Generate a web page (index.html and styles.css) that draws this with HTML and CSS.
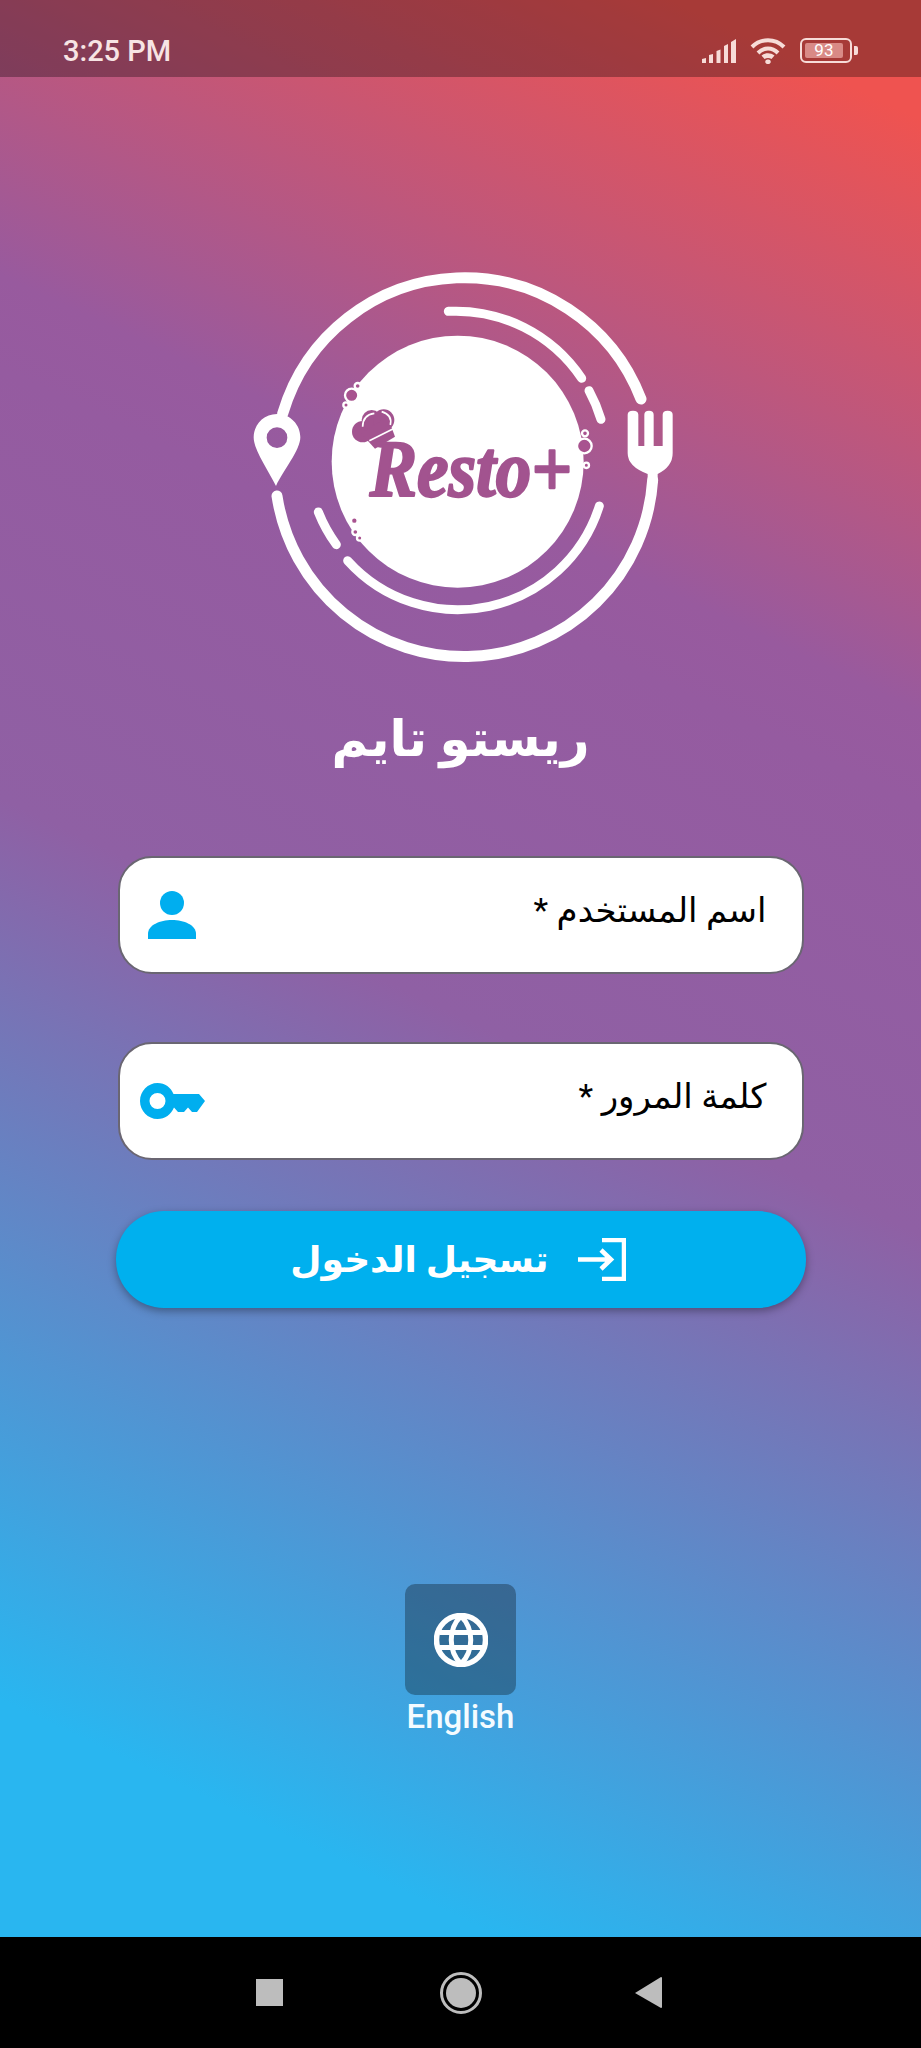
FILE: index.html
```html
<!DOCTYPE html>
<html lang="ar">
<head>
    <meta charset="UTF-8">
    <meta name="viewport" content="width=device-width, initial-scale=1.0">
    <title>Resto+</title>
    <link rel="stylesheet" href="styles.css">
</head>
<body>

<div class="app">
    <div class="status-bar">
        <span class="time">3:25 PM</span>
        <div class="status-icons">
            <svg class="signal" width="34" height="24" viewBox="0 0 34 24">
                <path d="M0 24v-4l4-1v5zM7 24v-8l4-1v9zM14.500 24v-12l4-1.500v13.500zM22 24v-17l4-2v19zM29 24v-21l5-3v24z"/>
            </svg>
            <svg class="wifi" width="36" height="26" viewBox="0 0 36 26">
                <path class="wifi-arc" d="M2 9C11 0 25 0 34 9M8 15c6-6 14-6 20 0"/>
                <path d="M11.500 17.500c4-3 9-3 13 0l-3 3.500c-2-1.500-5-1.500-7 0zM18 21.500a2.300 2.300 0 1 1 0 4.500a2.300 2.300 0 1 1 0-4.500z"/>
            </svg>
            <div class="battery">
                <div class="battery-body"><span class="battery-level">93</span></div>
                <div class="battery-tip"></div>
            </div>
        </div>
    </div>

    <!-- logo -->
    <svg class="logo" width="460" height="430" viewBox="0 0 1380 1290">
        <circle cx="680" cy="635" r="378" fill="#fff"/>
        <g fill="none" stroke="#fff" stroke-linecap="round">
            <path stroke-width="33" d="M155 491A568 568 0 0 1 1230 447"/>
            <path stroke-width="33" d="M1265 690A567.400 567.400 0 0 1 138 738"/>
            <path stroke-width="27" d="M652 184A455 455 0 0 1 1052 385"/>
            <path stroke-width="27" d="M1074 422A455 455 0 0 1 1110 508"/>
            <path stroke-width="27" d="M1105 768A445 445 0 0 1 350 932"/>
            <path stroke-width="27" d="M262 786A445 445 0 0 0 316 884"/>
        </g>
        <!-- pin -->
        <path fill="#fff" fill-rule="evenodd" d="M138 492C98 492 68 524 68 562C68 600 112 660 135 708C158 660 208 600 208 562C208 524 178 492 138 492ZM138 532a31 31 0 1 1 0 62a31 31 0 1 1 0-62Z"/>
        <!-- fork -->
        <path fill="#fff" d="M1190 494Q1190 482 1206 482Q1222 482 1222 494V588H1240V494Q1240 482 1254 482Q1268 482 1268 494V588H1295V494Q1295 482 1310 482Q1325 482 1325 494V610Q1325 650 1280 672V700H1250V672Q1190 650 1190 610Z"/>
        <!-- bubbles -->
        <g fill="#a8538f" stroke="#fff" stroke-width="7">
            <circle cx="362" cy="436" r="20"/>
            <circle cx="380" cy="408" r="9"/>
            <circle cx="345" cy="465" r="8"/>
            <circle cx="1060" cy="588" r="22"/>
            <circle cx="1062" cy="550" r="9"/>
            <circle cx="1066" cy="646" r="8"/>
            <circle cx="370" cy="812" r="10"/>
            <circle cx="373" cy="846" r="9"/>
            <circle cx="386" cy="864" r="8"/>
        </g>
        <!-- chef hat -->
        <g fill="#a2538f">
            <circle cx="395" cy="545" r="32"/>
            <circle cx="422" cy="510" r="30"/>
            <circle cx="458" cy="510" r="32"/>
            <path d="M390 550L470 500L492 560L432 596Z"/>
        </g>
        <path fill="none" stroke="#fff" stroke-width="5" d="M395 530Q395 495 430 490M452 485Q485 495 478 525M415 572L490 535"/>
        <text class="logo-text" x="416" y="737" textLength="606" lengthAdjust="spacingAndGlyphs">Resto+</text>
    </svg>

    <h1 class="title">ريستو تايم</h1>

    <div class="field">
        <span class="field-label">اسم المستخدم *</span>
        <span class="field-icon">
            <svg width="48" height="48" viewBox="0 0 48 48">
                <ellipse cx="24" cy="12" rx="12" ry="12"/>
                <path d="M0 48V43C0 34 12 29 24 29C36 29 48 34 48 43V48Z"/>
            </svg>
        </span>
    </div>

    <div class="field field-password">
        <span class="field-label">كلمة المرور *</span>
        <span class="field-icon">
            <svg width="65" height="36" viewBox="0 0 65 36">
                <path fill-rule="evenodd" d="M17.500 0C25 0 31 4.500 33.500 11H59L65 18L57 29H52L48 24.500L44 29H38L34 24.500C31 31.500 25 36 17.500 36C8 36 0 28 0 18C0 8 8 0 17.500 0ZM17.500 10a8 8 0 1 0 0 16a8 8 0 1 0 0-16Z"/>
            </svg>
        </span>
    </div>

    <button class="login-btn" type="button">
        <svg class="login-icon" width="48" height="43" viewBox="0 0 48 43">
            <path d="M24 2H46V41H24M0 21.500H32M23 12L33 21.500L23 31"/>
        </svg>
        <span>تسجيل الدخول</span>
    </button>

    <div class="lang">
        <div class="lang-box">
            <svg width="54" height="54" viewBox="0 0 54 54">
                <g fill="none" stroke="#fff" stroke-width="5.500">
                    <circle cx="27" cy="27" r="24.500"/>
                    <path stroke-width="5" d="M27 3C14 16 14 38 27 51M27 3C40 16 40 38 27 51M6 19.500H48M6 34.500H48"/>
                </g>
            </svg>
        </div>
        <span class="lang-name">English</span>
    </div>
</div>

<div class="nav-bar">
    <div class="nav-square"></div>
    <div class="nav-home"><div class="nav-home-dot"></div></div>
    <svg width="27" height="31" viewBox="0 0 27 31">
        <path fill="#bdbdbd" d="M0 16L26 0Q27 0 27 1V30Q27 31 26 31Z"/>
    </svg>
</div>

</body>
</html>
```

FILE: styles.css
```css
* {
    box-sizing: border-box;
}

body {
    margin: 0;
    width: 921px;
    height: 2048px;
    font-family: Roboto, "DejaVu Sans", sans-serif;
    background-color: #000;
}

.app {
    height: 1937px;
    display: flex;
    flex-direction: column;
    align-items: center;
    background: linear-gradient(25.4deg, #29b6f0 10%, #8f60a4 48%, #955ba0 66%, #985a9e 70%, #ef5350 95%);
}

.status-bar {
    width: 100%;
    height: 77px;
    padding: 24px 63px 0;
    display: flex;
    justify-content: space-between;
    align-items: center;
    background-color: rgba(0, 0, 0, 0.3);
    color: #f7e4e4;
}

.time {
    font-size: 29px;
    font-weight: 500;
}

.status-icons {
    display: flex;
    align-items: center;
    gap: 14px;
}

.signal, .wifi {
    fill: #f7dcd8;
}

.wifi-arc {
    fill: none;
    stroke: #f7dcd8;
    stroke-width: 4;
}

.battery {
    display: flex;
    align-items: center;
    gap: 2px;
}

.battery-body {
    width: 52px;
    height: 25px;
    padding: 3px;
    border: 2.500px solid #f7dcd8;
    border-radius: 6px;
}

.battery-level {
    display: block;
    width: 90%;
    height: 100%;
    border-radius: 2px;
    background-color: #d98a86;
    color: #fff;
    font-size: 17px;
    line-height: 14px;
    text-align: center;
}

.battery-tip {
    width: 4px;
    height: 9px;
    border-radius: 0 2px 2px 0;
    background-color: #f7dcd8;
}

.logo {
    margin-top: 173px;
}

.logo-text {
    font-family: "Liberation Serif", serif;
    font-style: italic;
    font-weight: 700;
    font-size: 240px;
    fill: #a2538f;
    stroke: #a2538f;
    stroke-width: 7;
    stroke-linejoin: round;
}

.title {
    margin: 8px 0 0;
    height: 102px;
    line-height: 102px;
    color: #fff;
    font-size: 50px;
    font-weight: 700;
}

.field {
    width: 686px;
    height: 118px;
    margin-top: 66px;
    padding: 0 35px 0 20px;
    display: flex;
    flex-direction: row;
    justify-content: space-between;
    align-items: center;
    direction: rtl;
    background-color: #fff;
    border: 2.500px solid #6a6672;
    border-radius: 34px;
}

.field-password {
    margin-top: 68px;
}

.field-label {
    padding-bottom: 10px;
    font-size: 34px;
    color: #000;
}

.field-icon {
    width: 65px;
    display: flex;
    justify-content: center;
    fill: #00aeef;
}

.login-btn {
    width: 690px;
    height: 97px;
    margin-top: 51px;
    padding: 0 5px 0 0;
    display: flex;
    justify-content: center;
    align-items: center;
    gap: 29px;
    direction: rtl;
    border: none;
    border-radius: 48px;
    background-color: #00b0ee;
    box-shadow: 0 3px 8px rgba(0, 0, 0, 0.35);
    color: #fff;
    font-family: inherit;
    font-size: 36px;
    font-weight: 700;
}

.login-icon {
    fill: none;
    stroke: #fff;
    stroke-width: 4.500;
}

.lang {
    margin-top: 276px;
    display: flex;
    flex-direction: column;
    align-items: center;
}

.lang-box {
    width: 111px;
    height: 111px;
    display: flex;
    justify-content: center;
    align-items: center;
    border-radius: 10px;
    background-color: rgba(0, 0, 0, 0.3);
}

.lang-name {
    margin-top: 2px;
    color: #f4fbff;
    font-size: 33px;
    font-weight: 500;
}

.nav-bar {
    height: 111px;
    padding: 0 259px 0 256px;
    display: flex;
    justify-content: space-between;
    align-items: center;
    background-color: #000;
}

.nav-square {
    width: 27px;
    height: 27px;
    background-color: #bdbdbd;
}

.nav-home {
    width: 42px;
    height: 42px;
    margin-left: 4px;
    padding: 3px;
    border: 3px solid #bdbdbd;
    border-radius: 50%;
}

.nav-home-dot {
    width: 100%;
    height: 100%;
    border-radius: 50%;
    background-color: #bdbdbd;
}
```
